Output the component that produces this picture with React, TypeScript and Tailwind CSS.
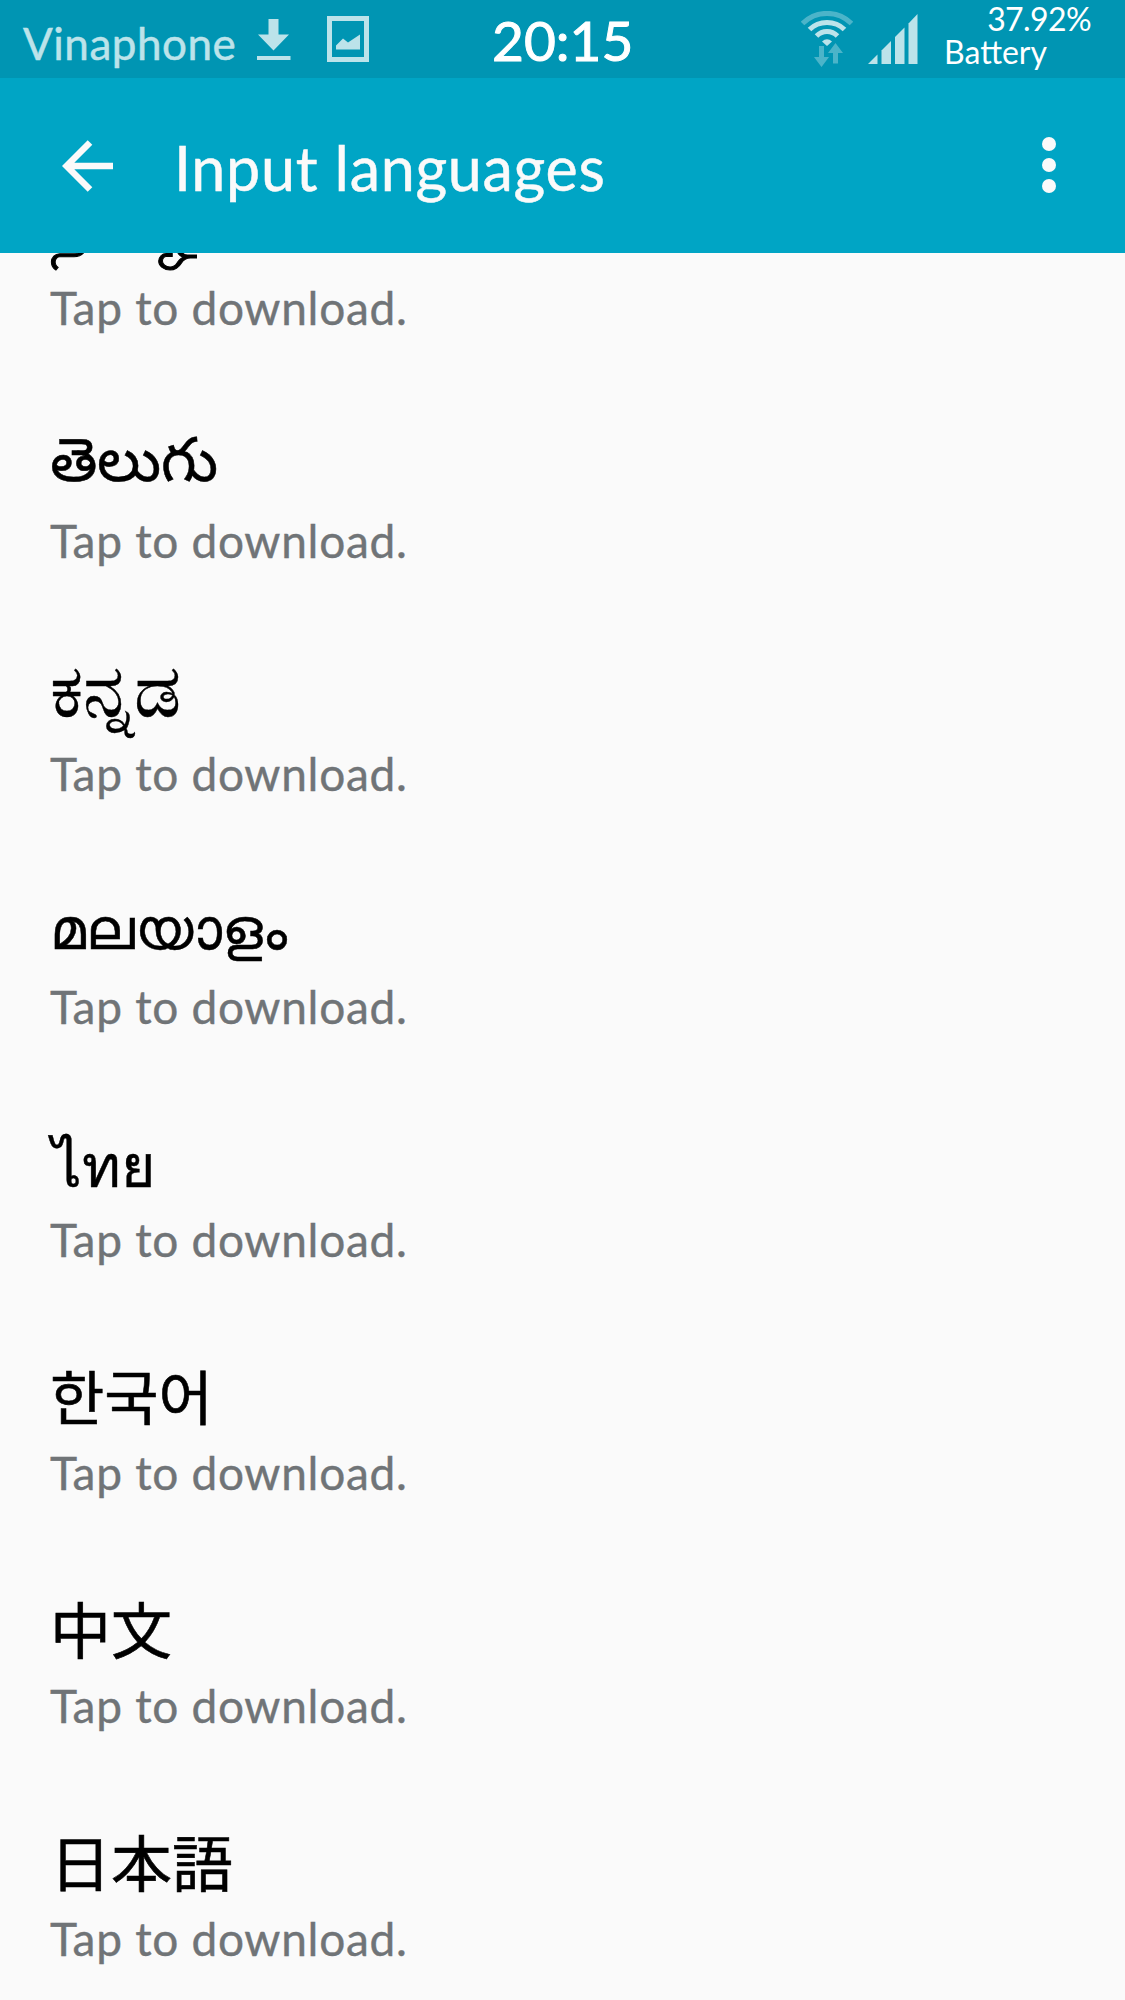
import { clsx } from "clsx";

type Language = {
  id: string;
  label: string;
  className: string;
};

// scripts sit at different heights in their fonts, so each one carries its own size and leading
const languages: Language[] = [
  { id: "ta", label: "தமிழ்", className: "text-[63px] leading-[66px] [-webkit-text-stroke:1px_black]" },
  { id: "te", label: "తెలుగు", className: "text-[61px] leading-[66px] [-webkit-text-stroke:0.5px_black]" },
  { id: "kn", label: "ಕನ್ನಡ", className: "text-[74px] leading-[59px] [-webkit-text-stroke:0.4px_black]" },
  { id: "ml", label: "മലയാളം", className: "text-[56.500px] leading-[73px] [-webkit-text-stroke:0.5px_black]" },
  { id: "th", label: "ไทย", className: "pl-[2px] text-[59px] leading-[80px] [-webkit-text-stroke:0.4px_black]" },
  { id: "ko", label: "한국어", className: "text-[59px] leading-[80px] [-webkit-text-stroke:0.6px_black]" },
  { id: "zh", label: "中文", className: "text-[61px] leading-[81px] [-webkit-text-stroke:0.6px_black]" },
  { id: "ja", label: "日本語", className: "text-[61px] leading-[81px] [-webkit-text-stroke:0.6px_black]" },
];

function DownloadIcon() {
  return (
    <svg width="34" height="42" viewBox="0 0 34 42" fill="currentColor">
      <path d="M11.5 0h10v15.500h10.500L16.500 31.500 1 15.500h10.500z" />
      <path d="M0 37h33.500v4H0z" />
    </svg>
  );
}

function PictureIcon() {
  return (
    <svg width="42" height="46" viewBox="0 0 42 46" fill="none">
      <path d="M2.500 2.500h37v41h-37z" stroke="currentColor" strokeWidth="5" />
      <path d="M9 33.500v-4l7-7 5 4 12-8v15z" fill="currentColor" />
    </svg>
  );
}

function WifiIcon() {
  return (
    <svg width="52" height="56" viewBox="0 0 52 56" fill="none">
      <g stroke="currentColor" strokeWidth="5">
        <path d="M1.500 12.500C15-1 37-1 50.500 12.500" opacity="0.4" />
        <path d="M8.500 18.500C18 9 34 9 43.500 18.500" />
        <path d="M15.500 25c6-6 15-6 21 0" />
      </g>
      <path d="M21 30.500q5-4.500 10 0l-5 4.500z" fill="currentColor" />
      <g fill="currentColor" opacity="0.4">
        <path d="M18 35h5v11h5l-7.500 10L13 46h5z" />
        <path d="M32 52.500V42h-5l7.500-10L42 42h-5v10.500z" />
      </g>
    </svg>
  );
}

function SignalIcon() {
  return (
    <svg width="50" height="50" viewBox="0 0 50 50" fill="currentColor">
      <path d="M0 50l9.500-9.500V50z" />
      <path d="M13.500 50V36.500l9.500-9.500v23z" />
      <path d="M27 50V23l9.500-9.500V50z" />
      <path d="M40.500 50V9.500L49.500 0v50z" />
    </svg>
  );
}

function StatusBar() {
  return (
    <div className="flex h-[78px] bg-[#0095b3] text-[#bce3ea]">
      <div className="flex w-[492px] items-start pl-[23px]">
        <span className="w-[234px] whitespace-nowrap pt-[16px] text-[44px] leading-[54px] tracking-[0.5px] [-webkit-text-stroke:0.5px_currentColor]">
          Vinaphone
        </span>
        <div className="pt-[19px]">
          <DownloadIcon />
        </div>
        <div className="ml-[36px] pt-4">
          <PictureIcon />
        </div>
      </div>
      <span className="w-[309px] whitespace-nowrap pt-[9px] text-[55px] leading-[62px] text-white [-webkit-text-stroke:1px_currentColor]">
        20:15
      </span>
      <div className="w-[67px] pt-[11px]">
        <WifiIcon />
      </div>
      <div className="w-[76px] pt-[14px]">
        <SignalIcon />
      </div>
      <div className="flex w-[147px] flex-col pt-[2px] text-[32px] leading-[33px] text-white">
        <span className="self-end whitespace-nowrap tracking-[-0.6px]">37.92%</span>
        <span className="whitespace-nowrap">Battery</span>
      </div>
    </div>
  );
}

function AppBar() {
  return (
    <header className="flex h-[175px] items-start bg-[#00a5c5] text-[#fafafa]">
      <button className="ml-[62px] mt-[62px]" aria-label="Back">
        <svg width="52" height="52" viewBox="0 0 52 52" fill="none">
          <path
            d="M28 2.500L4.500 26 28 49.500M4.500 26H51"
            stroke="currentColor"
            strokeWidth="6.500"
          />
        </svg>
      </button>
      <h1 className="ml-[60px] mt-[50px] whitespace-nowrap text-[61px] leading-[80px] tracking-[0.7px] [-webkit-text-stroke:0.5px_currentColor]">
        Input languages
      </h1>
      <button className="ml-auto mr-[69px] mt-[59px] flex flex-col gap-[7px]" aria-label="More options">
        <span className="size-[14px] rounded-full bg-current" />
        <span className="size-[14px] rounded-full bg-current" />
        <span className="size-[14px] rounded-full bg-current" />
      </button>
    </header>
  );
}

function LanguageRow({ language }: { language: Language }) {
  return (
    <li className="h-[233px] pl-[50px]">
      <div
        className={clsx(
          "h-[86px] whitespace-nowrap font-['Noto_Sans','Noto_Sans_CJK_JP',sans-serif] text-black",
          language.className,
        )}
      >
        {language.label}
      </div>
      <div className="whitespace-nowrap text-[46px] leading-[59px] tracking-[0.7px] text-[#707477] [-webkit-text-stroke:0.4px_currentColor]">
        Tap to download.
      </div>
    </li>
  );
}

export default function App() {
  return (
    <div className="flex h-[2000px] w-[1125px] flex-col overflow-hidden bg-[#fafafa] font-['Lato',sans-serif]">
      <StatusBar />
      <AppBar />
      <main className="flex-1 overflow-hidden">
        {/* list is scrolled, the first row sits partly under the app bar */}
        <ul className="-mt-[61px]">
          {languages.map((language) => (
            <LanguageRow key={language.id} language={language} />
          ))}
        </ul>
      </main>
    </div>
  );
}
